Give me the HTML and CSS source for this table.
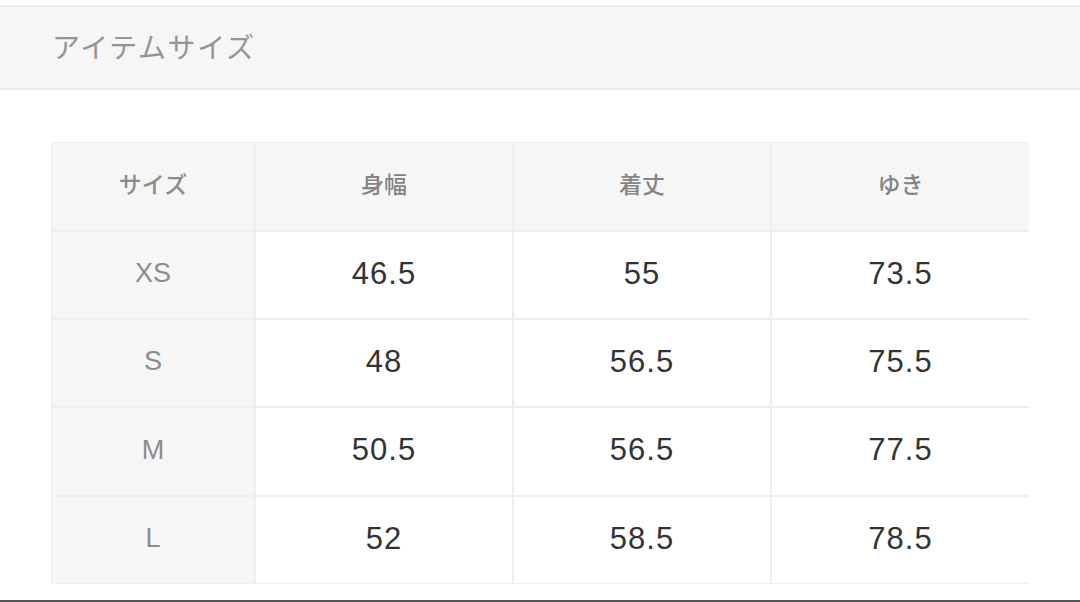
FILE: index.html
```html
<!DOCTYPE html>
<html lang="ja">
<head>
<meta charset="utf-8">
<link rel="stylesheet" href="styles.css">
</head>
<body>
<div class="page">
  <div class="top-gap"></div>
  <header class="section-head">
    <h2 class="section-title">アイテムサイズ</h2>
  </header>
  <main class="content">
    <div class="size-table">
      <div class="cell head side">サイズ</div>
      <div class="cell head">身幅</div>
      <div class="cell head">着丈</div>
      <div class="cell head">ゆき</div>

      <div class="cell side">XS</div>
      <div class="cell val">46.5</div>
      <div class="cell val">55</div>
      <div class="cell val">73.5</div>

      <div class="cell side">S</div>
      <div class="cell val">48</div>
      <div class="cell val">56.5</div>
      <div class="cell val">75.5</div>

      <div class="cell side">M</div>
      <div class="cell val">50.5</div>
      <div class="cell val">56.5</div>
      <div class="cell val">77.5</div>

      <div class="cell side">L</div>
      <div class="cell val">52</div>
      <div class="cell val">58.5</div>
      <div class="cell val">78.5</div>
    </div>
  </main>
  <div class="bottom-bar"></div>
</div>
</body>
</html>
```

FILE: styles.css
```css
* { box-sizing: border-box; }
html, body {
  margin: 0;
  padding: 0;
  background: #ffffff;
}
body {
  width: 1080px;
  height: 602px;
  overflow: hidden;
  font-family: "Liberation Sans", "Noto Sans CJK JP", sans-serif;
}
.page {
  display: flex;
  flex-direction: column;
  height: 602px;
}
.top-gap {
  height: 5px;
  background: #ffffff;
}
.section-head {
  height: 85px;
  background: #f6f6f6;
  border-top: 2px solid #ebebeb;
  border-bottom: 2px solid #ebebeb;
  display: flex;
  align-items: center;
  padding-left: 52px;
}
.section-title {
  margin: 0;
  font-family: "Noto Sans CJK JP", sans-serif;
  font-weight: 400;
  font-size: 28px;
  letter-spacing: 1.6px;
  color: #959595;
  line-height: 1;
  padding-bottom: 4px;
}
.content {
  flex: 1;
  padding: 52px 51px 0 51px;
}
.size-table {
  display: grid;
  grid-template-columns: 202px 256px 256px 257px;
  grid-template-rows: 87px 86px 86px 87px 86px;
  gap: 2px;
  padding: 1px;
  background: #eeeeee;
  width: 978px;
}
.cell {
  display: flex;
  align-items: center;
  justify-content: center;
  background: #ffffff;
}
.cell.head {
  background: #f6f6f6;
  font-family: "Noto Sans CJK JP", sans-serif;
  font-weight: 500;
  font-size: 23px;
  color: #858585;
  padding-bottom: 8px;
}
.cell.side {
  background: #f6f6f6;
  color: #8c8c8c;
  font-size: 27px;
  padding-bottom: 3px;
}
.cell.head.side {
  font-family: "Noto Sans CJK JP", sans-serif;
  font-size: 23px;
  padding-bottom: 8px;
}
.cell.val {
  color: #333333;
  font-size: 31px;
  letter-spacing: 1px;
  padding-bottom: 3px;
}
.bottom-bar {
  height: 2px;
  background: #555555;
  margin-top: auto;
}
```
